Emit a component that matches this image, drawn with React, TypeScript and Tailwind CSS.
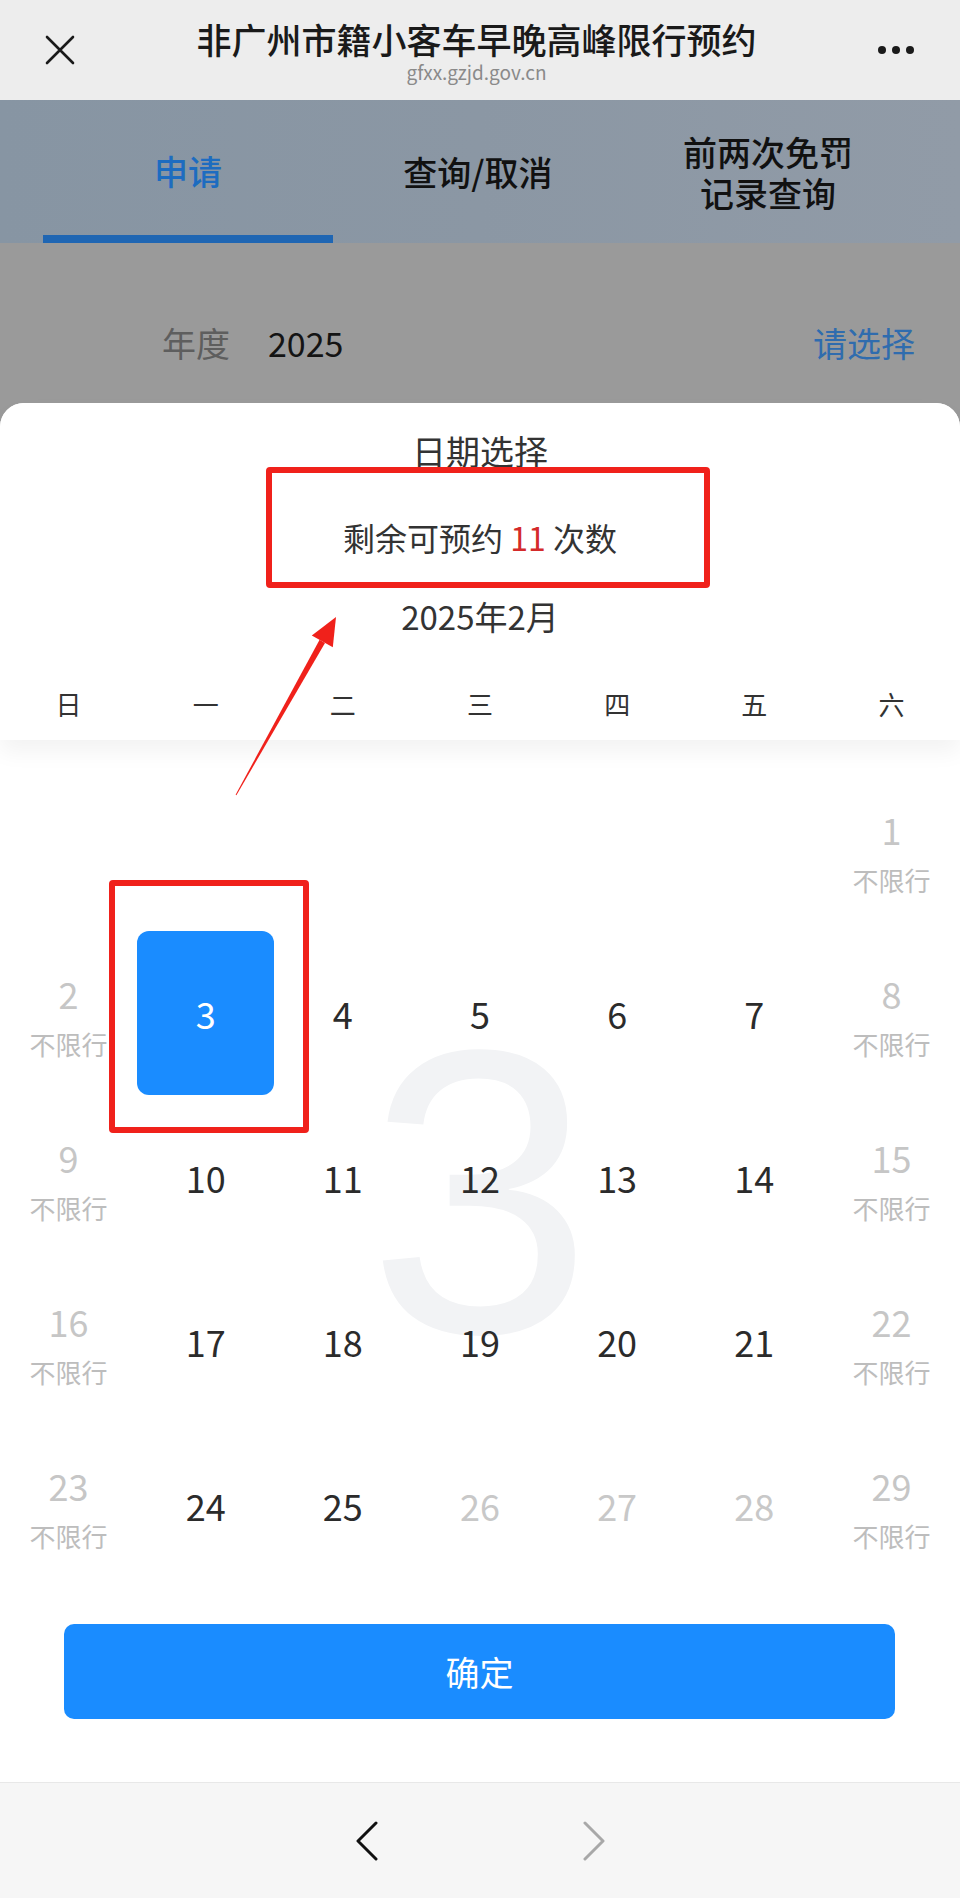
import React from 'react';

type Day = { n: number | null; kind?: 'weekend' | 'open' | 'past' | 'selected' };

const WEEK = ['日', '一', '二', '三', '四', '五', '六'];

// Feb 2025 as shown in the screenshot (last Saturday really reads "29")
const ROWS: Day[][] = [
  [{ n: null }, { n: null }, { n: null }, { n: null }, { n: null }, { n: null }, { n: 1, kind: 'weekend' }],
  [{ n: 2, kind: 'weekend' }, { n: 3, kind: 'selected' }, { n: 4, kind: 'open' }, { n: 5, kind: 'open' }, { n: 6, kind: 'open' }, { n: 7, kind: 'open' }, { n: 8, kind: 'weekend' }],
  [{ n: 9, kind: 'weekend' }, { n: 10, kind: 'open' }, { n: 11, kind: 'open' }, { n: 12, kind: 'open' }, { n: 13, kind: 'open' }, { n: 14, kind: 'open' }, { n: 15, kind: 'weekend' }],
  [{ n: 16, kind: 'weekend' }, { n: 17, kind: 'open' }, { n: 18, kind: 'open' }, { n: 19, kind: 'open' }, { n: 20, kind: 'open' }, { n: 21, kind: 'open' }, { n: 22, kind: 'weekend' }],
  [{ n: 23, kind: 'weekend' }, { n: 24, kind: 'open' }, { n: 25, kind: 'open' }, { n: 26, kind: 'past' }, { n: 27, kind: 'past' }, { n: 28, kind: 'past' }, { n: 29, kind: 'weekend' }],
];

function DayCell({ day }: { day: Day }) {
  if (day.n === null) return <div className="h-[164px]" />;
  if (day.kind === 'selected') {
    return (
      <div className="h-[164px] flex items-center justify-center rounded-[12px] bg-[#1a8cff]">
        <span className="text-[36px] leading-[40px] text-white">{day.n}</span>
      </div>
    );
  }
  if (day.kind === 'weekend') {
    return (
      <div className="h-[164px] flex flex-col items-center justify-center pt-[6px]">
        <span className="text-[36px] leading-[40px] text-[#c6c6c6]">{day.n}</span>
        <span className="mt-[16px] text-[26px] leading-[30px] text-[#bdbdbd]">不限行</span>
      </div>
    );
  }
  return (
    <div className="h-[164px] flex items-center justify-center">
      <span className={`text-[36px] leading-[40px] ${day.kind === 'past' ? 'text-[#c8c8c8]' : 'text-[#2b2b2b]'}`}>{day.n}</span>
    </div>
  );
}

export default function App() {
  return (
    <div
      className="relative w-[960px] h-[1898px] overflow-hidden bg-[#9a9a9a] flex flex-col"
      style={{ fontFamily: '"Noto Sans CJK SC", "Noto Sans", sans-serif' }}
    >
      {/* wechat nav bar */}
      <div className="h-[100px] shrink-0 bg-[#ededed] flex items-center px-[45px]">
        <svg width="30" height="30" viewBox="0 0 30 30" className="shrink-0">
          <path d="M2 2 L28 28 M28 2 L2 28" stroke="#1a1a1a" strokeWidth="2.6" strokeLinecap="round" />
        </svg>
        <div className="flex-1 flex flex-col items-center pt-[2px]">
          <span className="text-[35px] leading-[42px] font-medium text-[#1a1a1a]">非广州市籍小客车早晚高峰限行预约</span>
          <span className="text-[19px] leading-[24px] text-[#8a8a8a]">gfxx.gzjd.gov.cn</span>
        </div>
        <div className="shrink-0 flex items-center gap-[6px] w-[37px]">
          <span className="w-[8px] h-[8px] rounded-full bg-[#1a1a1a]" />
          <span className="w-[8px] h-[8px] rounded-full bg-[#1a1a1a]" />
          <span className="w-[8px] h-[8px] rounded-full bg-[#1a1a1a]" />
        </div>
      </div>

      {/* tabs under the overlay */}
      <div className="h-[143px] shrink-0 bg-gradient-to-r from-[#8795a3] via-[#8b97a4] to-[#919ba7] flex px-[43px]">
        <div className="w-[290px] flex flex-col">
          <div className="flex-1 flex items-center justify-center pt-[6px] text-[34px] font-medium text-[#1d6cc0]">申请</div>
          <div className="h-[8px] bg-[#1f66b3]" />
        </div>
        <div className="w-[290px] flex items-center justify-center text-[34px] font-medium text-[#111]">查询/取消</div>
        <div className="w-[290px] flex flex-col items-center justify-center text-[34px] leading-[41px] font-medium text-[#111]">
          <span>前两次免罚</span>
          <span>记录查询</span>
        </div>
      </div>

      {/* form row under the overlay */}
      <div className="h-[160px] shrink-0 flex items-start pt-[78px] pl-[162px] pr-[45px]">
        <span className="text-[34px] leading-[44px] text-[#5e5e5e]">年度</span>
        <span className="ml-[38px] text-[34px] leading-[44px] text-[#141414]">2025</span>
        <span className="ml-auto text-[34px] leading-[44px] text-[#2f6cae]">请选择</span>
      </div>

      {/* date picker sheet */}
      <div className="relative h-[1379px] shrink-0 bg-white rounded-t-[24px] flex flex-col">
        <div className="relative z-10 bg-white rounded-t-[24px] h-[337px] flex flex-col items-center shadow-[0_12px_22px_rgba(0,0,0,0.05)]">
          <span className="mt-[28px] text-[34px] leading-[40px] text-[#333]">日期选择</span>
          <span className="mt-[46px] text-[32px] leading-[40px] text-[#333]">
            剩余可预约 <span className="text-[#d42a2a]">11</span> 次数
          </span>
          <span className="mt-[39px] text-[33px] leading-[40px] text-[#333]">2025年2月</span>
          <div className="mt-[50px] w-full grid grid-cols-7">
            {WEEK.map((w) => (
              <span key={w} className="text-center text-[26px] leading-[36px] text-[#333]">{w}</span>
            ))}
          </div>
        </div>

        <div className="relative pt-[27px]">
          <div className="absolute left-0 right-0 top-[27px] h-[820px] flex items-center justify-center pointer-events-none">
            <span
              className="relative top-[14px] text-[405px] leading-none text-[#f2f3f5]"
              style={{ fontFamily: '"Liberation Sans", Arial, sans-serif' }}
            >
              3
            </span>
          </div>
          <div className="relative grid grid-cols-7">
            {ROWS.flat().map((d, i) => (
              <DayCell key={i} day={d} />
            ))}
          </div>
        </div>

        <button className="mt-[37px] ml-[64px] w-[831px] h-[95px] rounded-[10px] bg-[#1a8cff] text-white text-[34px]">确定</button>
      </div>

      {/* browser toolbar */}
      <div className="h-[116px] shrink-0 bg-[#f6f6f6] border-t border-[#e8e8e8] flex items-center justify-center gap-[205px]">
        <svg width="22" height="40" viewBox="0 0 22 40">
          <path d="M20 2 L2 20 L20 38" fill="none" stroke="#111" strokeWidth="3" strokeLinecap="round" strokeLinejoin="round" />
        </svg>
        <svg width="22" height="40" viewBox="0 0 22 40">
          <path d="M2 2 L20 20 L2 38" fill="none" stroke="#a8a8a8" strokeWidth="3" strokeLinecap="round" strokeLinejoin="round" />
        </svg>
      </div>

      {/* red annotation marks drawn over the screenshot */}
      <div className="absolute left-[266px] top-[467px] w-[444px] h-[121px] border-[6px] border-[#f0211b] rounded-[4px] pointer-events-none z-20" />
      <div className="absolute left-[109px] top-[880px] w-[200px] h-[253px] border-[6px] border-[#f0211b] rounded-[4px] pointer-events-none z-20" />
      <svg className="absolute left-0 top-0 pointer-events-none z-20" width="960" height="900" viewBox="0 0 960 900">
        <polygon points="235.6,794.8 236.4,795.2 325,643 319.6,639.8" fill="#f0211b" />
        <polygon points="336,617 311.8,635.5 332.8,647.3" fill="#f0211b" />
      </svg>
    </div>
  );
}
